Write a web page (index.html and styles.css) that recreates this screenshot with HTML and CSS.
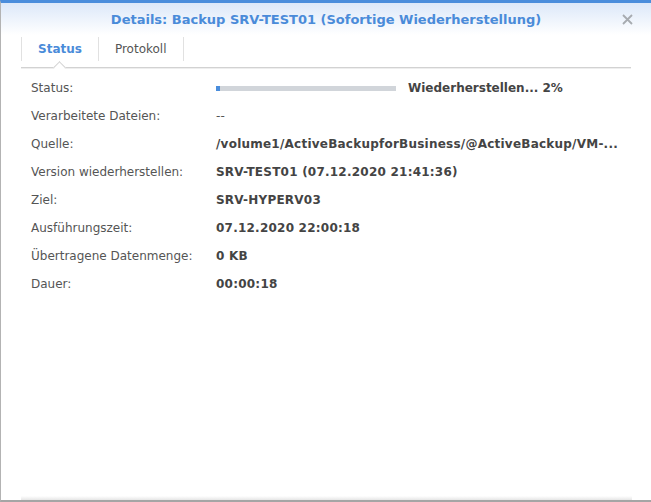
FILE: index.html
```html
<!DOCTYPE html>
<html lang="de">
<head>
<meta charset="utf-8">
<title>Details</title>
<link rel="stylesheet" href="styles.css">
</head>
<body>
<div class="window">
  <div class="header">
    <div class="title">Details: Backup SRV-TEST01 (Sofortige Wiederherstellung)</div>
    <div class="close" aria-label="Schließen">
      <svg width="11" height="11" viewBox="0 0 11 11"><path d="M1 1 L10 10 M10 1 L1 10" stroke="#a7abb0" stroke-width="1.8" fill="none"/></svg>
    </div>
  </div>
  <div class="tabs">
    <div class="tab active">Status</div>
    <div class="tab">Protokoll</div>
  </div>
  <div class="details">
    <div class="row">
      <div class="label">Status:</div>
      <div class="value progress-cell">
        <div class="bar"><div class="fill" style="width:2%"></div></div>
        <span>Wiederherstellen... 2%</span>
      </div>
    </div>
    <div class="row"><div class="label">Verarbeitete Dateien:</div><div class="value plain">--</div></div>
    <div class="row"><div class="label">Quelle:</div><div class="value">/volume1/ActiveBackupforBusiness/@ActiveBackup/VM-...</div></div>
    <div class="row"><div class="label">Version wiederherstellen:</div><div class="value">SRV-TEST01 (07.12.2020 21:41:36)</div></div>
    <div class="row"><div class="label">Ziel:</div><div class="value">SRV-HYPERV03</div></div>
    <div class="row"><div class="label">Ausführungszeit:</div><div class="value">07.12.2020 22:00:18</div></div>
    <div class="row"><div class="label">Übertragene Datenmenge:</div><div class="value">0 KB</div></div>
    <div class="row"><div class="label">Dauer:</div><div class="value">00:00:18</div></div>
  </div>
  <div class="footer"></div>
</div>
</body>
</html>
```
FILE: styles.css
```css
html, body {
  margin: 0;
  padding: 0;
  background: #ffffff;
}
.window {
  width: 651px;
  height: 502px;
  box-sizing: border-box;
  border-top: 3px solid #4a8ddc;
  border-left: 1px solid #b3b3b3;
  border-bottom: 2px solid #a5a5a5;
  display: flex;
  flex-direction: column;
  font-family: "DejaVu Sans", Verdana, sans-serif;
  font-size: 12px;
  background: #ffffff;
}
.header {
  height: 32px;
  flex: none;
  display: grid;
  grid-template-columns: 1fr auto 1fr;
  align-items: center;
  background: linear-gradient(#dce8f9, #ffffff);
}
.title {
  grid-column: 2;
  font-size: 13px;
  font-weight: bold;
  color: #4a8bd9;
  white-space: nowrap;
}
.close {
  grid-column: 3;
  justify-self: end;
  margin-right: 18px;
  width: 11px;
  height: 11px;
  display: flex;
}
.tabs {
  flex: none;
  margin: 2px 20px 0 20px;
  display: flex;
  padding-bottom: 6px;
  border-bottom: 1px solid #d2d2d2;
  box-shadow: 0 1px 0 #eeeeee;
}
.tab {
  position: relative;
  height: 24px;
  display: flex;
  align-items: center;
  padding: 0 16px;
  border-right: 1px solid #e1e1e1;
  color: #555555;
}
.tab:first-child {
  border-left: 1px solid #e1e1e1;
}
.tab.active {
  color: #4a8bd9;
  font-weight: bold;
}
.tab.active::after {
  content: "";
  position: absolute;
  left: 50%;
  top: calc(100% + 2px);
  width: 9px;
  height: 9px;
  margin-left: -5px;
  box-sizing: border-box;
  background: #ffffff;
  border-top: 1px solid #d2d2d2;
  border-left: 1px solid #d2d2d2;
  transform: rotate(45deg);
}
.details {
  flex: 1;
  padding: 6px 0 0 30px;
}
.row {
  display: grid;
  grid-template-columns: 185px 1fr;
  height: 28px;
  align-items: center;
}
.label {
  color: #555555;
  white-space: nowrap;
}
.value {
  color: #444444;
  font-weight: bold;
  white-space: nowrap;
  letter-spacing: 0.23px;
}
.value.plain {
  font-weight: normal;
  color: #555555;
}
.progress-cell {
  display: flex;
  align-items: center;
  gap: 12px;
  letter-spacing: 0;
}
.bar {
  width: 180px;
  height: 5px;
  background: #d1d5da;
}
.fill {
  height: 100%;
  min-width: 4px;
  background: #4a8ddc;
}
.footer {
  flex: none;
  height: 4px;
  margin: 0 19px 0 20px;
  background: linear-gradient(#ffffff, #e6e6e6);
}
```
